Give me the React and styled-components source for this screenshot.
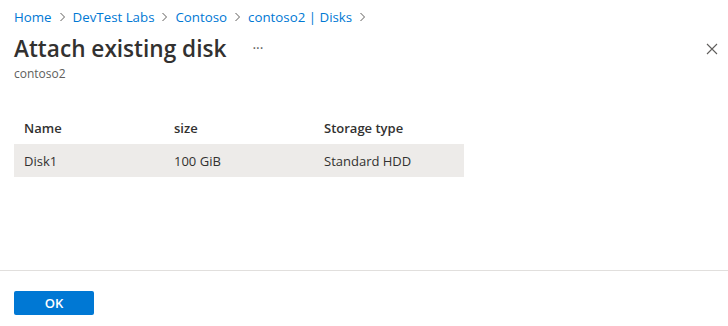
import React from 'react';
import styled, { createGlobalStyle } from 'styled-components';

const Global = createGlobalStyle`
  html, body { margin: 0; padding: 0; background: #fff; }
  body { font-family: "Segoe UI", "Open Sans", "Noto Sans", sans-serif; color: #323130; }
`;

const Page = styled.div`
  width: 728px;
  height: 326px;
  display: flex;
  flex-direction: column;
  overflow: hidden;
`;

const Body = styled.div`
  flex: 1;
  padding: 7px 14px 0 14px;
`;

const Crumbs = styled.nav`
  display: flex;
  align-items: center;
  gap: 7px;
  font-size: 13.3px;
  height: 20px;
`;

const Crumb = styled.a`
  color: #0078d4;
  text-decoration: none;
`;

const Chevron = styled.span`
  color: #605e5c;
  display: flex;
  align-items: center;
`;

const HeaderRow = styled.div`
  display: flex;
  align-items: center;
  margin-top: 6px;
`;

const Title = styled.h1`
  margin: 0;
  font-size: 22.6px;
  font-weight: 600;
  line-height: 32px;
  color: #323130;
`;

const More = styled.span`
  margin-left: 26px;
  color: #605e5c;
  font-size: 14px;
  margin-top: -4px;
`;

const Close = styled.button`
  margin-left: auto;
  margin-right: -8px;
  border: 0;
  background: none;
  padding: 0;
  width: 20px;
  height: 20px;
  display: flex;
  align-items: center;
  justify-content: center;
`;

const Sub = styled.div`
  font-size: 12px;
  color: #605e5c;
  line-height: 16px;
  margin-top: 1px;
`;

const Table = styled.div`
  margin-top: 30px;
  width: 450px;
  font-size: 13px;
`;

const Row = styled.div`
  display: grid;
  grid-template-columns: 150px 150px 150px;
  align-items: center;
  height: ${p => (p.$head ? '32px' : '33px')};
  padding-left: 10px;
  background: ${p => (p.$selected ? '#edebe9' : 'transparent')};
  font-weight: ${p => (p.$head ? 600 : 400)};
`;

const Footer = styled.div`
  border-top: 1px solid #e1dfdd;
  height: 55px;
  padding: 0 14px;
  display: flex;
  align-items: center;
`;

const OkButton = styled.button`
  width: 80px;
  height: 24px;
  border: 0;
  border-radius: 2px;
  background: #0078d4;
  color: #fff;
  font-family: inherit;
  font-weight: 600;
  font-size: 13px;
  margin-top: 8px;
`;

const Chev = () => (
  <Chevron>
    <svg width="7" height="10" viewBox="0 0 7 10">
      <path d="M1.5 1l4 4-4 4" fill="none" stroke="#605e5c" strokeWidth="1" />
    </svg>
  </Chevron>
);

const crumbs = ['Home', 'DevTest Labs', 'Contoso', 'contoso2 | Disks'];

export default function App() {
  return (
    <Page>
      <Global />
      <Body>
        <Crumbs>
          {crumbs.map(c => (
            <React.Fragment key={c}>
              <Crumb href="#">{c}</Crumb>
              <Chev />
            </React.Fragment>
          ))}
        </Crumbs>
        <HeaderRow>
          <Title>Attach existing disk</Title>
          <More>···</More>
          <Close aria-label="Close">
            <svg width="12" height="12" viewBox="0 0 12 12">
              <path d="M1 1l10 10M11 1L1 11" stroke="#605e5c" strokeWidth="1.1" />
            </svg>
          </Close>
        </HeaderRow>
        <Sub>contoso2</Sub>
        <Table>
          <Row $head>
            <span>Name</span>
            <span>size</span>
            <span>Storage type</span>
          </Row>
          <Row $selected>
            <span>Disk1</span>
            <span>100 GiB</span>
            <span>Standard HDD</span>
          </Row>
        </Table>
      </Body>
      <Footer>
        <OkButton>OK</OkButton>
      </Footer>
    </Page>
  );
}
